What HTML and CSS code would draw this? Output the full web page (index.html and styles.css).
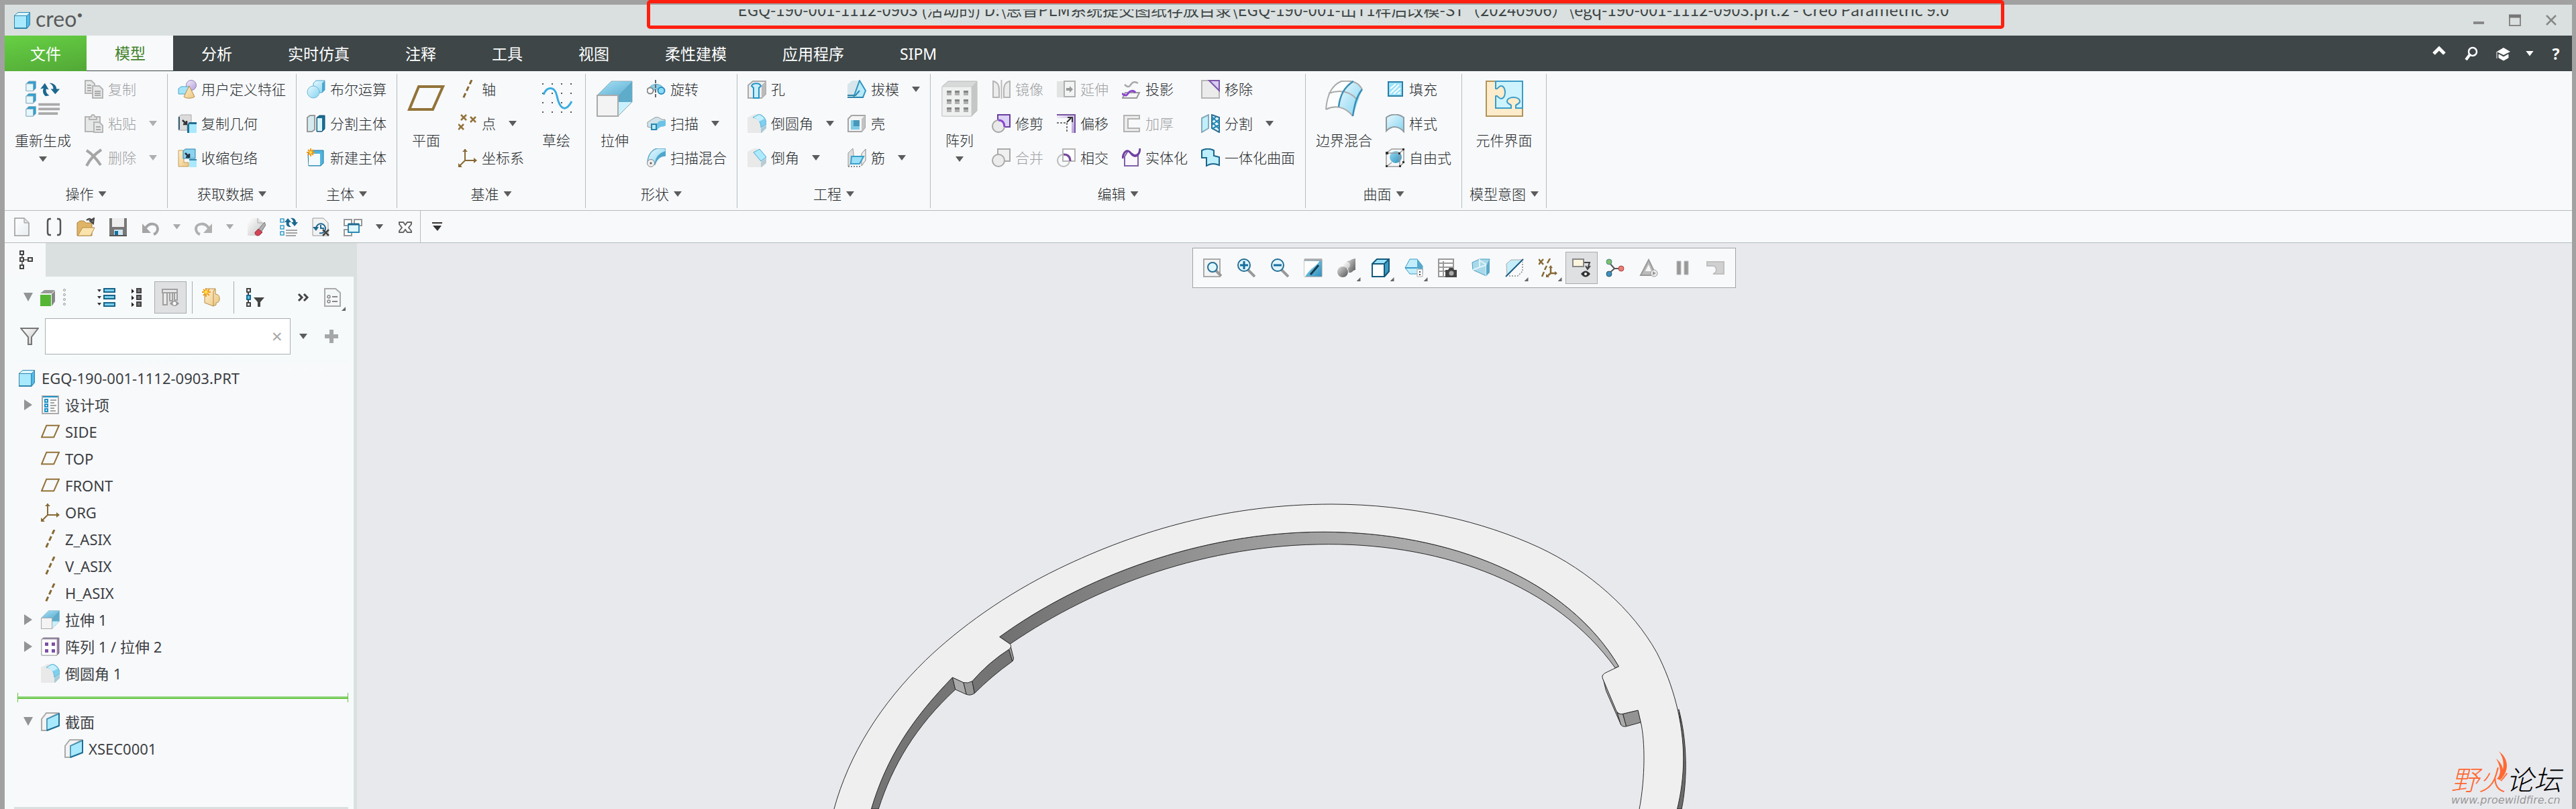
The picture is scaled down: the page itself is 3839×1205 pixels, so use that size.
FILE: index.html
```html
<!DOCTYPE html>
<html lang="zh-CN">
<head>
<meta charset="utf-8">
<title>Creo Parametric 9.0</title>
<link rel="stylesheet" href="styles.css">
</head>
<body>
<svg class="defs" aria-hidden="true">
  <defs>
    <linearGradient id="lb" x1="0" y1="0" x2="1" y2="1"><stop offset="0" stop-color="#e9f9fe"/><stop offset="1" stop-color="#84d3f1"/></linearGradient>
    <linearGradient id="db" x1="0" y1="0" x2="1" y2="1"><stop offset="0" stop-color="#9bdcf3"/><stop offset="1" stop-color="#2d8fbd"/></linearGradient>
    <linearGradient id="gr" x1="0" y1="0" x2="1" y2="1"><stop offset="0" stop-color="#fff"/><stop offset="1" stop-color="#c4c4c4"/></linearGradient>
    <linearGradient id="pg" x1="0" y1="0" x2="1" y2="1"><stop offset="0" stop-color="#fff"/><stop offset="1" stop-color="#e8edf1"/></linearGradient>
    <linearGradient id="dg" x1="0" y1="0" x2="1" y2="1"><stop offset="0" stop-color="#ddd"/><stop offset="1" stop-color="#555"/></linearGradient>
    <linearGradient id="tan" x1="0" y1="0" x2="1" y2="1"><stop offset="0" stop-color="#fff1cf"/><stop offset="1" stop-color="#ecc681"/></linearGradient>
    <linearGradient id="pu" x1="0" y1="0" x2="1" y2="1"><stop offset="0" stop-color="#f4effb"/><stop offset="1" stop-color="#b39ddb"/></linearGradient>
  </defs>
  <symbol id="cube" viewBox="0 0 28 28"><path d="M2 7 8 2h18v19l-5 6H2z" fill="#2f86ad"/><path d="M3 7 8 3h17l-4 4z" fill="#d9f5fe"/><path d="M3 8h17v17H3z" fill="#a9e9fd"/><path d="m21 8 4-4v17l-4 4z" fill="#52b9e6"/></symbol>
  <symbol id="regen" viewBox="0 0 54 56"><g id="rc"><path d="M1 5l4-4h11v11l-4 4H1z" fill="#2f9fd0" stroke="#93aebb"/><path d="M1 5h11v11H1z" fill="#e4f8fe" stroke="#93aebb"/></g><use href="#rc" y="19"/><use href="#rc" y="39"/><path d="M20 37h33M20 44h33M20 51h30" stroke="#a9a9a9" stroke-width="4"/><path d="M31 24c-4-3-5-8-3-12l-5 1 7-9 6 10-4-1c-1 4 1 8 5 10zM37 4c6-1 11 4 11 9h5l-7 8-7-8h4c0-4-2-7-6-9z" fill="#1c688f"/></symbol>
  <symbol id="copy" viewBox="0 0 28 28"><g fill="#e6e7e7" stroke="#b5b5b5" stroke-width="2"><path d="M1 1h9l5 5v14H1z"/><path d="M12 9h10l5 5v13H12z"/></g><path d="M4 8h6M4 12h6M4 16h6M15 17h9M15 20h9M15 23h9" stroke="#aaa" stroke-width="2"/></symbol>
  <symbol id="paste" viewBox="0 0 28 28"><g fill="#e6e7e7" stroke="#b5b5b5" stroke-width="2"><path d="M1 4h22v22H1z"/><path d="M7 4h3c0-4 5-4 5 0h3v4H7z"/><path d="M14 12h8l5 5v10H14z"/></g><path d="M17 19h7M17 23h7" stroke="#aaa" stroke-width="2"/></symbol>
  <symbol id="del" viewBox="0 0 28 28"><path d="M3 3c8 5 15 13 21 22M25 2C16 8 8 16 3 26" stroke="#a5a5a5" stroke-width="4" fill="none"/></symbol>
  <symbol id="udf" viewBox="0 0 28 28"><circle cx="20" cy="8" r="7.500" fill="url(#pu)" stroke="#8c86b5"/><path d="M1 13l4-3h12v11H1z" fill="#a5e4f8" stroke="#4aa7cd"/><path d="M17 9 9 25c3 3 13 3 16 0z" fill="url(#tan)" stroke="#b38a45"/></symbol>
  <symbol id="copygeo" viewBox="0 0 28 28"><path d="M1 4l4-3h15v12h-6v11H1z" fill="#dcdcdc" stroke="#aaa"/><path d="M1 4h2v19H1z" fill="#355f74"/><path d="m7 9 6 6m0-5v5H8" stroke="#333" stroke-width="2.500" fill="none"/><path d="M14 16l3-4h11v16H14z" fill="#1f6f94"/><path d="M17 15h11v13H17z" fill="#a9e9fd"/></symbol>
  <symbol id="shrink" viewBox="0 0 28 28"><path d="M1 3h8v18h7v6H1z" fill="url(#tan)" stroke="#c39a55"/><path d="M8 4l3-3h15v14H8z" fill="#8bd3ee" stroke="#2f86ad"/><path d="m11 7 6 6m0-5v5h-5" stroke="#234" stroke-width="2.500" fill="none"/><path d="M17 17h11v11H17z" fill="#a9e9fd"/><path d="M17 17h11" stroke="#2f86ad" stroke-width="2"/></symbol>
  <symbol id="bool" viewBox="0 0 28 28"><path d="M10 5l4-4h13v14l-4 4H10z" fill="url(#lb)" stroke="#4aa7cd"/><path d="m23 5 4-4v14l-4 4z" fill="#4aa7cd"/><ellipse cx="10" cy="18" rx="9" ry="9" fill="url(#lb)" stroke="#6bb7d6"/></symbol>
  <symbol id="split" viewBox="0 0 28 28"><path d="M1 5l4-3h7v21l-4 3H1z" fill="#d5e9f0" stroke="#999" stroke-width="2"/><path d="M15 5l4-3h8v20l-4 4h-8z" fill="#1c6d93" stroke="#14506d"/><path d="M16 6h7v19h-7z" fill="#d9f5fe"/></symbol>
  <symbol id="newbody" viewBox="0 0 28 28"><path d="M2 8l6-5h17v19l-4 4H3z" fill="#4fb4dc" stroke="#2477a0"/><path d="M3 8h17v17H3z" fill="#f3fafd"/><path d="M6 0v12M0 6h12M2 2l8 8M10 2l-8 8" stroke="#f09a1a" stroke-width="2"/><circle cx="6" cy="6" r="2" fill="#ffe04a"/></symbol>
  <symbol id="plane" viewBox="0 0 54 54"><path d="M16 9h36L37 43H2z" fill="none" stroke="#927339" stroke-width="4"/></symbol>
  <symbol id="axis" viewBox="0 0 28 28"><path d="M20 0 7 28" stroke="#866a34" stroke-width="3" stroke-dasharray="7 4" fill="none"/></symbol>
  <symbol id="point" viewBox="0 0 28 28"><path id="px" d="m4 1 8 8m0-8-8 8" stroke="#927339" stroke-width="2.500"/><use href="#px" x="14" y="3"/><use href="#px" x="-4" y="14"/></symbol>
  <symbol id="csys" viewBox="0 0 28 28"><path d="M10 1v17h17M10 18 1 27" stroke="#866a34" stroke-width="2" fill="none"/><path d="m6 5 4-4 4 4zM23 14l5 4-5 4zM0 22v6h6z" fill="#866a34"/></symbol>
  <symbol id="sketch" viewBox="0 0 54 54"><path d="M6 4h2v2H6zm14 0h2v2h-2zm14 0h2v2h-2zm14 0h2v2h-2zM6 18h2v2H6zm14 0h2v2h-2zm14 0h2v2h-2zm14 0h2v2h-2zM6 32h2v2H6zm14 0h2v2h-2zm14 0h2v2h-2zm14 0h2v2h-2zM6 46h2v2H6zm14 0h2v2h-2zm14 0h2v2h-2zm14 0h2v2h-2z" fill="#555"/><path d="M8 21c5-13 17-13 20 2s11 28 22 8" fill="none" stroke="#3aade0" stroke-width="3"/></symbol>
  <symbol id="extrude" viewBox="0 0 54 54"><path d="M1 22 22 1h31v31L32 53H1z" fill="#c9f1fd" stroke="#9aa5aa"/><path d="M22 1h31L32 22H1z" fill="url(#db)" opacity=".7"/><path d="M53 1v31H32V22z" fill="#5eabca"/><path d="M1 22h31v31H1z" fill="#f3f3f3" stroke="#aaa" stroke-width="2"/></symbol>
  <symbol id="revolve" viewBox="0 0 28 28"><path d="M3 14C5 4 23 4 25 14l-6 4c-3-6-7-6-10 0z" fill="#8ccfe8" stroke="#5aa9c8"/><circle cx="5" cy="16" r="4.500" fill="#fff" stroke="#888" stroke-width="2"/><circle cx="21.500" cy="16" r="5" fill="#8bdcf9" stroke="#2a8fc0" stroke-width="2"/><path d="M13 0v28" stroke="#666" stroke-width="2" stroke-dasharray="5 2"/></symbol>
  <symbol id="sweep" viewBox="0 0 28 28"><path d="M1 12 12 5c8-2 7 4 15 3v7c-8 3-9-2-16 6L1 19z" fill="#cfe3ea" stroke="#999"/><path d="M15 14c4-6 8-3 13-5v8c-6 3-8 0-13 7z" fill="#6cc3e5"/><path d="M7 15h7v8H7z" fill="#b8ecfc" stroke="#2a86b0" stroke-width="2"/></symbol>
  <symbol id="blend" viewBox="0 0 28 28"><path d="M1 20C2 8 9 1 16 0h12v11c-8 0-13 4-16 13z" fill="url(#lb)" stroke="#5fa9c5" stroke-width="1.500"/><path d="M12 24C12 13 18 7 28 4v7c-8 0-13 5-16 13z" fill="#4fa6cb"/><circle cx="6" cy="22" r="5.500" fill="#eee" stroke="#888"/><circle cx="6" cy="22" r="1.500" fill="#555"/></symbol>
  <symbol id="hole" viewBox="0 0 28 28"><path d="M1 8l7-6h19v19l-6 6H1z" fill="#eee" stroke="#aaa" stroke-width="2"/><path d="m21 8 6-6v19l-6 6z" fill="#bbb"/><path d="M6 9c2-5 12-5 14 0l-3 3v15H9V12z" fill="#c9effb" stroke="#2494c7" stroke-width="2"/></symbol>
  <symbol id="round" viewBox="0 0 28 28"><path d="M0 5 10 0h7L8 5c8 1 12 7 12 15v8H0z" fill="#e9e9e9"/><path d="M8 5 17 0c7 2 11 7 11 15l-8 5C20 11 15 6 8 5z" fill="#7fd0ef" stroke="#5ab0d2"/><path d="M9 5 17 1c4 1 6 3 8 6l-8 4c-2-3-5-5-8-6z" fill="#c4effc"/><path d="m20 21 8-5v5l-7 7h-1z" fill="#a9cbd8"/></symbol>
  <symbol id="chamfer" viewBox="0 0 28 28"><path d="M0 5 10 0h6L9 6l11 14v8H0z" fill="#e9e9e9"/><path d="m9 6 9-5 10 12-8 6z" fill="#aee9fc" stroke="#46a5cc"/><path d="m20 20 8-6v8l-7 6h-1z" fill="#b9ccd3"/></symbol>
  <symbol id="draft" viewBox="0 0 28 28"><path d="M0 7 7 1h11L9 25H0z" fill="#d7e6ea"/><path d="m18 1 9 15-4 10H9z" fill="#b9eafa" stroke="#2f95c2" stroke-width="2"/><path d="M0 23h12l6-7M0 26h24" stroke="#2f86ad" stroke-width="2" fill="none"/></symbol>
  <symbol id="shell" viewBox="0 0 28 28"><path d="M1 7l5-5h20v18l-5 6H1z" fill="#f4f4f4" stroke="#a5a5a5" stroke-width="2"/><path d="m21 7 5-5v18l-5 6z" fill="#c3c3c3"/><path d="M5 9h13v14H5z" fill="#80cce8"/><path d="M9 9h9v9H9z" fill="#4798b9"/></symbol>
  <symbol id="rib" viewBox="0 0 28 28"><path d="M1 7 8 0l2 17-9 10z" fill="#ddd" stroke="#999"/><path d="m21 8 6-7v17l-6 8z" fill="#eee" stroke="#888"/><path d="M6 12h18l-6 11H5z" fill="#9be0f7" stroke="#3aa0cb" stroke-width="2"/><path d="M1 27h19" stroke="#888" stroke-width="2" stroke-dasharray="2"/></symbol>
  <symbol id="pattern" viewBox="0 0 54 54"><path d="M1 9l9-8h43v44l-8 8H1z" fill="#d8d9d9" stroke="#b4b5b5"/><path d="M1 9h44v44H1z" fill="#eeefef" stroke="#ccc"/><path d="m45 9 8-8v44l-8 8z" fill="#c5c7c7"/><path d="M8 15h7v7H8zm12 0h7v7h-7zm13 0h7v7h-7zM8 28h7v7H8zm12 0h7v7h-7zm13 0h7v7h-7zM8 40h7v7H8zm12 0h7v7h-7zm13 0h7v7h-7z" fill="#b0b0b0"/><path d="M8 15h7v3H8zm12 0h7v3h-7zm13 0h7v3h-7zM8 28h7v3H8zm12 0h7v3h-7zm13 0h7v3h-7zM8 40h7v3H8zm12 0h7v3h-7zm13 0h7v3h-7z" fill="#858585"/></symbol>
  <symbol id="mirror" viewBox="0 0 28 28"><path d="M2 2c7 1 9 7 9 13v11H2zM27 2c-7 1-9 7-9 13v11h9z" fill="#ececec" stroke="#b5b5b5" stroke-width="2"/><path d="M14.500 0v28" stroke="#bbb" stroke-width="2"/></symbol>
  <symbol id="trim" viewBox="0 0 28 28"><path d="M9 1h18v18h-8C19 12 15 9 9 9z" fill="#dcd2f5" stroke="#6a3fa0" stroke-width="2"/><circle cx="10" cy="18" r="9" fill="#e2e2e2" fill-opacity=".7" stroke="#a5a5a5" stroke-width="2"/><path d="M10 9c6 0 9 4 9 10" stroke="#8b45d0" stroke-width="3" fill="none"/></symbol>
  <symbol id="merge" viewBox="0 0 28 28"><path d="M9 1h18v18H9z" fill="#f0f0f0" stroke="#aaa" stroke-width="2"/><circle cx="10" cy="18" r="9" fill="#ececec" stroke="#aaa" stroke-width="2"/></symbol>
  <symbol id="extend" viewBox="0 0 28 28"><path d="M0 2h11v24H0z" fill="#e2e3e3"/><path d="M11 2h16v23H11z" fill="#f3f4f4" stroke="#b0b0b0" stroke-width="2"/><path d="M14 12h5V9l5 5-5 5v-3h-5z" fill="#999"/></symbol>
  <symbol id="offset" viewBox="0 0 28 28"><path d="M0 0h28v28h-6V6H0z" fill="url(#pu)"/><path d="M0 1h27v27" stroke="#76559f" stroke-width="2" fill="none"/><path d="M0 13h15v15" stroke="#777" stroke-width="2" stroke-dasharray="3 2" fill="none"/><path d="m15 12 6-6m-5-1h7v7" stroke="#333" stroke-width="2" fill="none"/></symbol>
  <symbol id="intersect" viewBox="0 0 28 28"><path d="M9 1h18v18H9z" fill="#fff" stroke="#b5b5b5" stroke-width="2"/><circle cx="10" cy="18" r="9" fill="none" stroke="#bbb" stroke-width="2"/><path d="M10 9c7 0 10 4 10 10" stroke="#75489f" stroke-width="3" fill="none"/></symbol>
  <symbol id="project" viewBox="0 0 28 28"><path d="M4 7c6 6 8 2 10-1s6-4 10-1" stroke="#aaa" stroke-width="2.500" fill="none"/><path d="M5 19h21l-4 8H1z" fill="#f5f5f5" stroke="#999" stroke-width="2"/><path d="M0 20c6 6 8 2 10-1s7-4 10 0" stroke="#8b45d0" stroke-width="3" fill="none"/></symbol>
  <symbol id="thicken" viewBox="0 0 28 28"><path d="M26 2H3v24h23v-5H9V7h17z" fill="#ececec" stroke="#b3b3b3" stroke-width="2"/></symbol>
  <symbol id="solidify" viewBox="0 0 28 28"><path d="M4 12v14h20V8c-6 6-10-3-15-4z" fill="#faf8fd" stroke="#8160a8" stroke-width="2"/><path d="M1 15C2 5 8 0 13 7s13 6 14-7" fill="none" stroke="#71409f" stroke-width="3"/></symbol>
  <symbol id="remove" viewBox="0 0 28 28"><path d="M1 1h26v26H1z" fill="#ebebeb" stroke="#b5b5b5" stroke-width="2"/><path d="M12 1h15v15z" fill="#d8ccf4" stroke="#7c55a8" stroke-width="2"/></symbol>
  <symbol id="divide" viewBox="0 0 28 28"><path d="M1 6 11 1v20L1 27z" fill="#bff0fd" stroke="#8ab" stroke-width="2"/><path d="m16 1 11 4v22l-11-6z" fill="#e0f6fd" stroke="#2a6f94" stroke-width="2"/><path d="m16 4 11 10M16 12l11 10M27 8 16 16M27 16l-11 6M22 4l-6 6" stroke="#2487b5" stroke-width="2"/></symbol>
  <symbol id="unisurf" viewBox="0 0 28 28"><path d="M1 3c6-3 12-3 18 0v8l8 2v12c-7-3-13-3-19 1V14H1z" fill="#bdeefc" stroke="#19658c" stroke-width="2"/></symbol>
  <symbol id="boundary" viewBox="0 0 56 54"><path d="M1 43C3 20 10 7 24 1c12-1 24-1 31 12L41 53C30 39 15 36 1 43z" fill="#fbfdfe"/><path d="M28 16c4-7 8-12 14-15 7 2 11 6 13 12L41 53c-5-6-12-12-20-14 0-9 3-17 7-23z" fill="url(#lb)"/><path d="M1 43C3 20 10 7 24 1c12-1 24-1 31 12M1 43c14-7 29-4 40 10M5 19c15-5 30-5 42 9" stroke="#aaa" stroke-width="2" fill="none"/><path d="M42 1C28 10 22 22 20 39M55 13C46 25 44 35 41 53" stroke="#3b8eb5" stroke-width="2.500" fill="none"/></symbol>
  <symbol id="fill" viewBox="0 0 28 28"><path d="M4 3h21v21H4z" fill="#9be2fa" stroke="#2a7da5" stroke-width="2"/><path d="m7 13 8-7M7 20 20 7M12 21l10-9M18 21l4-3" stroke="#fff" stroke-width="2"/></symbol>
  <symbol id="style" viewBox="0 0 28 28"><path d="M1 5c8-6 18-6 26 0v21c-8-9-18-9-26-1z" fill="url(#lb)" stroke="#909a9e" stroke-width="2"/></symbol>
  <symbol id="free" viewBox="0 0 28 28"><circle cx="15" cy="13" r="9" fill="url(#db)"/><path d="M1 7 9 1h18v20l-6 6H1zM1 7h20v20M21 7l6-6M1 27l8-6" fill="none" stroke="#999" stroke-width="1.500"/><path d="M0 5h4v4H0zM0 25h3v3H0zM20 25h3v3h-3zM25 0h3v3h-3zM19 6h3v3h-3zM25 19h3v3h-3z" fill="#333"/></symbol>
  <symbol id="puzzle" viewBox="0 0 56 54"><path d="M1 1h54v52H1z" fill="#fdeccb" stroke="#b2935a" stroke-width="2"/><path d="M15 1h40v40H45v-4c1-2 6-2 6-6 0-8-19-8-19 0 0 4 5 4 6 6v4H15V23c3-2 4 4 8 4 8 0 8-19 0-19-4 0-5 6-8 4z" fill="#cdf3fe" stroke="#3a9cc8" stroke-width="2"/></symbol>
  <symbol id="new" viewBox="0 0 28 28"><path d="M4 1h14l7 7v19H4z" fill="url(#pg)" stroke="#999" stroke-width="1.500"/><path d="M18 1v7h7" fill="#ddd" stroke="#999"/></symbol>
  <symbol id="brackets" viewBox="0 0 28 28"><path d="M10 2H8Q5 2 5 6v16q0 4 3 4h2M19 2h2q3 0 3 4v16q0 4-3 4h-2" fill="none" stroke="#555" stroke-width="2.500"/></symbol>
  <symbol id="open" viewBox="0 0 28 28"><path d="M1 27V8l4-3h6l3 3h9v19z" fill="#e0b467" stroke="#ad8340"/><path d="m2 27 7-12h18l-6 12z" fill="#fbe3ac" stroke="#b58c48"/><path d="M15 4c4-4 7-2 8 1M26 1l-1 8-5-4z" stroke="#444" stroke-width="2" fill="#444" fill-opacity=".6"/></symbol>
  <symbol id="save" viewBox="0 0 28 28"><path d="M1 1h26v26H1z" fill="#777"/><path d="M5 1h18v13H5z" fill="#eee"/><path d="M8 18h13v9H8z" fill="#cfe6f0"/><path d="M9 20h5v6H9z" fill="#14719f"/><path d="M1 27h26" stroke="#555" stroke-width="2"/></symbol>
  <symbol id="undo" viewBox="0 0 28 28"><path d="M2 9v14h13z" fill="#a5a5a5"/><path d="M6 18C11 6 25 8 25 17c0 4-3 7-6 8" fill="none" stroke="#a5a5a5" stroke-width="4"/></symbol>
  <symbol id="redo" viewBox="0 0 28 28"><path d="M27 9v14H14z" fill="#b0b0b0"/><path d="M23 18C18 6 3 8 3 17c0 4 3 7 6 8" fill="none" stroke="#b0b0b0" stroke-width="4"/></symbol>
  <symbol id="erase" viewBox="0 0 28 28"><path d="M1 1h16l7 7-8 19H1z" fill="url(#gr)"/><path d="M16 1v7h8" fill="none" stroke="#aaa"/><path d="m26 7-9 11 4 4 7-11z" fill="#b0b0b0" stroke="#777"/><path d="m17 17-5 5c0 5 4 6 7 4l4-4z" fill="#d24555" stroke="#963040"/></symbol>
  <symbol id="regens" viewBox="0 0 28 28"><path d="M2 2h5v5H2zM2 12h5v5H2zM2 21h5v5H2z" fill="#eafaff" stroke="#3a9cc8" stroke-width="1.500"/><path d="M10 19h17M10 23h17M10 27h15" stroke="#888" stroke-width="1.500"/><path d="M15 14c-4-1-5-4-4-7H8l5-6 5 6h-3c-1 3 0 5 3 7zM17 1c5-1 8 2 8 6h3l-5 6-5-6h3c0-3-2-5-4-6z" fill="#1c688f"/></symbol>
  <symbol id="history" viewBox="0 0 28 28"><path d="M2 1h16l7 7v19H2z" fill="#f3f3f3" stroke="#999"/><path d="M7 16a7 7 0 1 1 5 7M14 11v5h5" fill="none" stroke="#1c688f" stroke-width="2"/><path d="M2 14h9l-4 6z" fill="#1c688f"/><path d="m17 18 9 9m0-9-9 9" stroke="#444" stroke-width="2.500"/></symbol>
  <symbol id="windows" viewBox="0 0 28 28"><path d="M1 3h11v9H1zM16 3h11v9H16zM1 18h11v9H1z" fill="#fff" stroke="#999" stroke-width="2"/><path d="M7 10h16v12H7z" fill="#dff6fd" stroke="#2a8ab5" stroke-width="2"/><path d="M7 10h16" stroke="#1c688f" stroke-width="3"/></symbol>
  <symbol id="closex" viewBox="0 0 28 28"><path d="M5 7h6l3 4 3-4h6v3l-4 5 4 5v2h-6l-3-4-3 4H5v-2l4-5-4-5z" fill="#fff" stroke="#666" stroke-width="2"/></symbol>
  <symbol id="more" viewBox="0 0 28 28"><path d="M7 8h15" stroke="#333" stroke-width="2"/><path d="M8 12h13l-6 8z" fill="#333"/></symbol>
  <symbol id="tree" viewBox="0 0 28 28"><path d="M9 6v16M9 14h9" stroke="#777" stroke-width="2"/><path d="M6 1h5v5H6zM6 11h5v5H6zM6 22h5v5H6zM18 11h6v5h-6z" fill="#fff" stroke="#444" stroke-width="2"/></symbol>
  <symbol id="green" viewBox="0 0 28 28"><path d="M3 8 9 3h16l-5 5z" fill="#999"/><path d="M3 10h16v17H3z" fill="#55b635"/><path d="m20 9 5-5v16l-5 7z" fill="#888"/></symbol>
  <symbol id="dots" viewBox="0 0 28 28"><g fill="#fff" stroke="#999"><circle cx="14" cy="3" r="1.500"/><circle cx="14" cy="10" r="1.500"/><circle cx="14" cy="17" r="1.500"/><circle cx="14" cy="24" r="1.500"/></g></symbol>
  <symbol id="expand" viewBox="0 0 28 28"><path d="M0 2h6L3 6zM0 12h6l-3 4zM0 22h6l-3 4z" fill="#333"/><path d="M10 1h16v5H10zM10 11h16v5H10zM10 22h16v5H10z" fill="#7cd0ef" stroke="#176389" stroke-width="2"/></symbol>
  <symbol id="collapse" viewBox="0 0 28 28"><path d="M6 1v7l4-3zM6 11v7l4-3zM6 21v7l4-3z" fill="#222"/><path d="M14 1h6v6h-6zM14 11h6v6h-6zM14 21h6v6h-6z" fill="#777" stroke="#444" stroke-width="2"/></symbol>
  <symbol id="columns" viewBox="0 0 28 28"><path d="M2 2h22v5H2zM3 7h6v18H3zM13 7h4v12h-4zM20 7h4v11h-4z" fill="#e9e9ea" stroke="#a0a0a0" stroke-width="2"/><path d="M13 23q7-8 14 0-7 8-14 0z" fill="#999"/><circle cx="20" cy="23" r="2.500" fill="#fff"/></symbol>
  <symbol id="newtan" viewBox="0 0 28 28"><path d="M4 4l4-3h12v8c6 1 6 4 6 7s-1 6-5 6v3l-4 2-13-5z" fill="url(#tan)" stroke="#b58c48"/><path d="M17 5v22M17 5l3-4" stroke="#b58c48"/><path d="M6 0v13M0 6h13M2 2l9 9M11 2l-9 9" stroke="#f09a1a" stroke-width="2"/><circle cx="6" cy="6" r="2.500" fill="#ffe04a"/></symbol>
  <symbol id="treefilter" viewBox="0 0 28 28"><path d="M4 5v18" stroke="#444" stroke-width="2"/><path d="M2 1h5v5H2zM2 22h5v5H2z" fill="#fff" stroke="#444" stroke-width="2"/><path d="M2 11h5v6H2z" fill="#5cc3ec" stroke="#1c688f" stroke-width="2"/><path d="M12 14h16l-6 7v7h-4v-7z" fill="#444"/></symbol>
  <symbol id="chevrons" viewBox="0 0 28 28"><path d="m7 9 5 5-5 5M15 9l5 5-5 5" fill="none" stroke="#444" stroke-width="3"/></symbol>
  <symbol id="listdoc" viewBox="0 0 28 28"><path d="M2 1h16l7 6v20H2z" fill="#f3f7f8" stroke="#aaa" stroke-width="2"/><circle cx="8" cy="13" r="2" fill="none" stroke="#888" stroke-width="1.500"/><circle cx="8" cy="20" r="2" fill="none" stroke="#888" stroke-width="1.500"/><path d="M13 13h8M13 20h8" stroke="#888" stroke-width="2"/></symbol>
  <symbol id="funnel" viewBox="0 0 28 28"><path d="M1 2h26L17 15v11h-5V15z" fill="url(#gr)" stroke="#777" stroke-width="2"/></symbol>
  <symbol id="items" viewBox="0 0 28 28"><path d="M2 1h24v26H2z" fill="#fbfbfb" stroke="#aaa" stroke-width="2"/><path d="M3 2h22" stroke="#2494c7" stroke-width="2"/><path d="M6 6h4v4H6zM6 13h4v4H6zM6 20h4v4H6z" fill="#d9f5fe" stroke="#2494c7" stroke-width="2"/><path d="M14 7h9M14 11h6M14 15h9M14 19h6M14 23h8" stroke="#888" stroke-width="1.500"/></symbol>
  <symbol id="patternp" viewBox="0 0 28 28"><path d="M1 3l3-2h23v23l-3 3H1z" fill="#8c6ba8" stroke="#888"/><path d="M1 3h23v24H1z" fill="#fff" stroke="#aaa"/><path d="M6 8h5v5H6zM16 8h5v5h-5zM6 18h5v5H6zM16 18h5v5h-5z" fill="#7a51a6"/></symbol>
  <symbol id="section" viewBox="0 0 28 28"><path d="M1 10 8 1l19 0L9 10v17H1z" fill="#f3f3f3" stroke="#aaa" stroke-width="2"/><path d="m9 10 18-8v18L9 27z" fill="#a9e9fd" stroke="#3a8fb5" stroke-width="1.500"/><path d="M27 1v19L9 27" fill="none" stroke="#1f6f94" stroke-width="2"/></symbol>
  <symbol id="zfit" viewBox="0 0 28 28"><path d="M1 1h24v26H1z" fill="#f3f3f3" stroke="#aaa" stroke-width="2"/><path d="m18 17 9 9" stroke="#999" stroke-width="4"/><circle cx="14" cy="13" r="7" fill="#dff5fc" stroke="#256f94" stroke-width="2"/></symbol>
  <symbol id="zin" viewBox="0 0 28 28"><path d="m16 16 11 11" stroke="#999" stroke-width="4"/><circle cx="11" cy="10" r="9" fill="#dff5fc" stroke="#256f94" stroke-width="2"/><path d="M5 10h12M11 4v12" stroke="#176f9b" stroke-width="3"/></symbol>
  <symbol id="zout" viewBox="0 0 28 28"><path d="m16 16 11 11" stroke="#999" stroke-width="4"/><circle cx="11" cy="10" r="9" fill="#dff5fc" stroke="#256f94" stroke-width="2"/><path d="M5 10h12" stroke="#176f9b" stroke-width="3"/></symbol>
  <symbol id="repaint" viewBox="0 0 28 28"><path d="M1 1h26v26H1z" fill="url(#db)" stroke="#999"/><path d="M1 4h22C21 10 10 14 2 27H1z" fill="#fff"/><path d="M1 2h26" stroke="#aaa" stroke-width="3"/><path d="M22 10 10 24" stroke="#173c50" stroke-width="3"/></symbol>
  <symbol id="render" viewBox="0 0 28 28"><path d="M14 4c5 0 8-4 13-4v17c-4 0-4 5-10 4z" fill="url(#dg)"/><circle cx="14" cy="10" r="5" fill="url(#gr)"/><circle cx="8" cy="20" r="8" fill="url(#dg)"/></symbol>
  <symbol id="display" viewBox="0 0 28 28"><path d="M2 8 9 1h18v18l-7 8H2z" fill="#9be2fa" stroke="#14597c" stroke-width="2"/><path d="m20 8 7-7v18l-7 8z" fill="#3d9cc4" stroke="#14597c" stroke-width="2"/><path d="M2 8h18v19H2z" fill="#fff" stroke="#14597c" stroke-width="2"/></symbol>
  <symbol id="views" viewBox="0 0 28 28"><path d="m1 14 7-13h11l8 10v12H8z" fill="#c2edfa" stroke="#3a9cc8"/><path d="m19 1 8 10v12l-8-9z" fill="#56a9cb"/><path d="M1 14h18" stroke="#3a9cc8" stroke-width="2"/><path d="M19 16h8v11h-8z" fill="#fff" stroke="#aaa"/><path d="M22 19h2v2h-2zM22 23h2v2h-2z" fill="#444"/></symbol>
  <symbol id="vmgr" viewBox="0 0 28 28"><path d="M1 1h22v26H1zM1 7h22M1 13h22M1 19h22M8 4v23" fill="#fff" stroke="#999" stroke-width="2"/><path d="M11 17h4l2-3h5l2 3h4v11H11z" fill="#444"/><circle cx="20" cy="22" r="3.500" fill="#aaa"/></symbol>
  <symbol id="persp" viewBox="0 0 28 28"><path d="M1 6 12 1h15l-5 25L2 17z" fill="#a8d9ea" stroke="#4a9dc0"/><path d="M12 1v12l15-5M12 13 2 17M22 26V9L12 3" fill="none" stroke="#e0f4fa" stroke-width="2"/><path d="M22 10 27 1v20l-5 5z" fill="#5ba8c8"/></symbol>
  <symbol id="cut" viewBox="0 0 28 28"><path d="M2 8 9 2h18L3 26z" fill="#c5eefa" stroke="#aaa"/><path d="M1 27 27 1" stroke="#1b5d85" stroke-width="2"/><path d="M6 26h13l7-7V5" fill="none" stroke="#888" stroke-width="1.500" stroke-dasharray="2"/></symbol>
  <symbol id="datum" viewBox="0 0 28 28"><path d="m0 1 7 8m0-8L0 9M17 0l-4 7M12 11l-3 6M8 20l-3 7M18 12v10h9M18 22l-6 5" fill="none" stroke="#866a34" stroke-width="2.500"/><path d="m15 14 3-4 3 4zM24 19l4 3-4 3zM11 23v5h5z" fill="#866a34"/></symbol>
  <symbol id="anno" viewBox="0 0 28 28"><path d="M1 1h16v11H1z" fill="#fdf6df" stroke="#888" stroke-width="2"/><path d="M18 6h8l-3 9M20 11l3 5 4-5" stroke="#444" stroke-width="2" fill="none"/><path d="M13 23q7-9 14 0-7 9-14 0z" fill="#333"/><circle cx="20" cy="23" r="2" fill="#fff"/></symbol>
  <symbol id="spin" viewBox="0 0 28 28"><path d="M5 6 13 15 4 23M13 15h11" stroke="#555" stroke-width="2" fill="none"/><circle cx="5" cy="5" r="4" fill="#7fbf6a" stroke="#488"/><circle cx="5" cy="23" r="4" fill="#3f8fc0" stroke="#256"/><circle cx="23" cy="15" r="4" fill="#e87c74" stroke="#a44"/></symbol>
  <symbol id="sim" viewBox="0 0 28 28"><path d="M14 2 25 25H2z" fill="#bbb" stroke="#999" stroke-width="2"/><path d="m14 9 4 10h-9z" fill="#f5f5f5"/><circle cx="22" cy="22" r="5" fill="#eee" stroke="#999"/><path d="m20 19 5 3-5 3z" fill="#999"/></symbol>
  <symbol id="pause" viewBox="0 0 28 28"><path d="M6 4h6v20H6zM17 4h6v20h-6z" fill="#999" stroke="#bbb"/></symbol>
  <symbol id="exit" viewBox="0 0 28 28"><path d="M1 5h25v18H10c7-2 6-12-1-12H1z" fill="#d0d0d0" stroke="#c0c0c0" stroke-width="2"/></symbol>
  <symbol id="w-min" viewBox="0 0 28 28"><path d="M6 18h16" stroke="#888" stroke-width="4"/></symbol>
  <symbol id="w-max" viewBox="0 0 28 28"><path d="M6 7h16v15H6z" fill="none" stroke="#888" stroke-width="2"/><path d="M5 8h18" stroke="#777" stroke-width="5"/></symbol>
  <symbol id="w-close" viewBox="0 0 28 28"><path d="m7 7 14 14m0-14L7 21" stroke="#888" stroke-width="2.500"/></symbol>
  <symbol id="up" viewBox="0 0 28 28"><path d="m6 14 8-8 8 8" fill="none" stroke="#fff" stroke-width="5"/></symbol>
  <symbol id="search" viewBox="0 0 28 28"><circle cx="16" cy="11" r="6" fill="none" stroke="#fff" stroke-width="2.500"/><path d="m12 15-6 8" stroke="#fff" stroke-width="4"/></symbol>
  <symbol id="learn" viewBox="0 0 28 28"><path d="m4 11 10-6 10 6-10 5z" fill="#fff"/><path d="m7 15 7 4 7-4v5l-7 4-7-4zM4 11v10" fill="#fff" stroke="#fff"/></symbol>
</svg>

<div class="window">
  <header class="titlebar">
    <div class="brand"><svg class="i"><use href="#cube"/></svg><span class="brand-name">creo<sup>•</sup></span></div>
    <div class="caption"><h1>EGQ-190-001-1112-0903 (活动的) D:\思普PLM系统提交图纸存放目录\EGQ-190-001-出T1样后改模-ST（20240906）\egq-190-001-1112-0903.prt.2 - Creo Parametric 9.0</h1></div>
    <div class="win-buttons">
      <button aria-label="最小化"><svg class="i"><use href="#w-min"/></svg></button>
      <button aria-label="最大化"><svg class="i"><use href="#w-max"/></svg></button>
      <button aria-label="关闭"><svg class="i"><use href="#w-close"/></svg></button>
    </div>
    <div class="highlight"></div>
  </header>

  <nav class="tabs">
    <button class="tab file">文件</button><button class="tab active">模型</button><button class="tab">分析</button><button class="tab">实时仿真</button><button class="tab">注释</button><button class="tab">工具</button><button class="tab">视图</button><button class="tab">柔性建模</button><button class="tab">应用程序</button><button class="tab">SIPM</button>
    <div class="tab-tools">
      <button aria-label="折叠功能区"><svg class="i"><use href="#up"/></svg></button>
      <button aria-label="搜索"><svg class="i"><use href="#search"/></svg></button>
      <button aria-label="学习"><svg class="i"><use href="#learn"/></svg></button>
      <button class="narrow" aria-label="更多"><span class="caret"></span></button>
      <button class="help">?</button>
    </div>
  </nav>

  <div class="ribbon">
    <section class="group">
      <div class="cols">
        <button class="big"><svg class="ib"><use href="#regen"/></svg><span>重新生成</span><i class="caret"></i></button>
        <div class="col">
          <button class="cmd" disabled><svg class="i"><use href="#copy"/></svg>复制</button>
          <button class="cmd" disabled><svg class="i"><use href="#paste"/></svg>粘贴<i class="caret"></i></button>
          <button class="cmd" disabled><svg class="i"><use href="#del"/></svg>删除<i class="caret"></i></button>
        </div>
      </div>
      <button class="group-label">操作<i class="caret"></i></button>
    </section>
    <section class="group">
      <div class="cols">
        <div class="col">
          <button class="cmd"><svg class="i"><use href="#udf"/></svg>用户定义特征</button>
          <button class="cmd"><svg class="i"><use href="#copygeo"/></svg>复制几何</button>
          <button class="cmd"><svg class="i"><use href="#shrink"/></svg>收缩包络</button>
        </div>
      </div>
      <button class="group-label">获取数据<i class="caret"></i></button>
    </section>
    <section class="group">
      <div class="cols">
        <div class="col">
          <button class="cmd"><svg class="i"><use href="#bool"/></svg>布尔运算</button>
          <button class="cmd"><svg class="i"><use href="#split"/></svg>分割主体</button>
          <button class="cmd"><svg class="i"><use href="#newbody"/></svg>新建主体</button>
        </div>
      </div>
      <button class="group-label">主体<i class="caret"></i></button>
    </section>
    <section class="group">
      <div class="cols">
        <button class="big"><svg class="ib"><use href="#plane"/></svg><span>平面</span></button>
        <div class="col">
          <button class="cmd"><svg class="i"><use href="#axis"/></svg>轴</button>
          <button class="cmd"><svg class="i"><use href="#point"/></svg>点<i class="caret"></i></button>
          <button class="cmd"><svg class="i"><use href="#csys"/></svg>坐标系</button>
        </div>
        <button class="big"><svg class="ib"><use href="#sketch"/></svg><span>草绘</span></button>
      </div>
      <button class="group-label">基准<i class="caret"></i></button>
    </section>
    <section class="group">
      <div class="cols">
        <button class="big"><svg class="ib"><use href="#extrude"/></svg><span>拉伸</span></button>
        <div class="col">
          <button class="cmd"><svg class="i"><use href="#revolve"/></svg>旋转</button>
          <button class="cmd"><svg class="i"><use href="#sweep"/></svg>扫描<i class="caret"></i></button>
          <button class="cmd"><svg class="i"><use href="#blend"/></svg>扫描混合</button>
        </div>
      </div>
      <button class="group-label">形状<i class="caret"></i></button>
    </section>
    <section class="group">
      <div class="cols">
        <div class="col">
          <button class="cmd"><svg class="i"><use href="#hole"/></svg>孔</button>
          <button class="cmd"><svg class="i"><use href="#round"/></svg>倒圆角<i class="caret"></i></button>
          <button class="cmd"><svg class="i"><use href="#chamfer"/></svg>倒角<i class="caret"></i></button>
        </div>
        <div class="col">
          <button class="cmd"><svg class="i"><use href="#draft"/></svg>拔模<i class="caret"></i></button>
          <button class="cmd"><svg class="i"><use href="#shell"/></svg>壳</button>
          <button class="cmd"><svg class="i"><use href="#rib"/></svg>筋<i class="caret"></i></button>
        </div>
      </div>
      <button class="group-label">工程<i class="caret"></i></button>
    </section>
    <section class="group">
      <div class="cols">
        <button class="big"><svg class="ib"><use href="#pattern"/></svg><span>阵列</span><i class="caret"></i></button>
        <div class="col">
          <button class="cmd" disabled><svg class="i"><use href="#mirror"/></svg>镜像</button>
          <button class="cmd"><svg class="i"><use href="#trim"/></svg>修剪</button>
          <button class="cmd" disabled><svg class="i"><use href="#merge"/></svg>合并</button>
        </div>
        <div class="col">
          <button class="cmd" disabled><svg class="i"><use href="#extend"/></svg>延伸</button>
          <button class="cmd"><svg class="i"><use href="#offset"/></svg>偏移</button>
          <button class="cmd"><svg class="i"><use href="#intersect"/></svg>相交</button>
        </div>
        <div class="col">
          <button class="cmd"><svg class="i"><use href="#project"/></svg>投影</button>
          <button class="cmd" disabled><svg class="i"><use href="#thicken"/></svg>加厚</button>
          <button class="cmd"><svg class="i"><use href="#solidify"/></svg>实体化</button>
        </div>
        <div class="col">
          <button class="cmd"><svg class="i"><use href="#remove"/></svg>移除</button>
          <button class="cmd"><svg class="i"><use href="#divide"/></svg>分割<i class="caret"></i></button>
          <button class="cmd"><svg class="i"><use href="#unisurf"/></svg>一体化曲面</button>
        </div>
      </div>
      <button class="group-label">编辑<i class="caret"></i></button>
    </section>
    <section class="group">
      <div class="cols">
        <button class="big"><svg class="ib"><use href="#boundary"/></svg><span>边界混合</span></button>
        <div class="col">
          <button class="cmd"><svg class="i"><use href="#fill"/></svg>填充</button>
          <button class="cmd"><svg class="i"><use href="#style"/></svg>样式</button>
          <button class="cmd"><svg class="i"><use href="#free"/></svg>自由式</button>
        </div>
      </div>
      <button class="group-label">曲面<i class="caret"></i></button>
    </section>
    <section class="group">
      <div class="cols">
        <button class="big"><svg class="ib"><use href="#puzzle"/></svg><span>元件界面</span></button>
      </div>
      <button class="group-label">模型意图<i class="caret"></i></button>
    </section>
  </div>

  <div class="quick">
    <button aria-label="新建"><svg class="i"><use href="#new"/></svg></button>
    <button aria-label="窗口"><svg class="i"><use href="#brackets"/></svg></button>
    <button aria-label="打开"><svg class="i"><use href="#open"/></svg></button>
    <button aria-label="保存"><svg class="i"><use href="#save"/></svg></button>
    <button aria-label="撤消"><svg class="i"><use href="#undo"/></svg></button>
    <button class="narrow pale" aria-label="撤消列表"><i class="caret"></i></button>
    <button aria-label="重做"><svg class="i"><use href="#redo"/></svg></button>
    <button class="narrow pale" aria-label="重做列表"><i class="caret"></i></button>
    <button aria-label="拭除"><svg class="i"><use href="#erase"/></svg></button>
    <button aria-label="重新生成"><svg class="i"><use href="#regens"/></svg></button>
    <button aria-label="历史"><svg class="i"><use href="#history"/></svg></button>
    <button aria-label="窗口切换"><svg class="i"><use href="#windows"/></svg></button>
    <button class="narrow" aria-label="窗口列表"><i class="caret"></i></button>
    <button class="last" aria-label="关闭窗口"><svg class="i"><use href="#closex"/></svg></button>
    <button aria-label="自定义"><svg class="i"><use href="#more"/></svg></button>
  </div>

  <div class="work">
    <aside class="side">
      <div class="side-tabs"><button class="side-tab" aria-label="模型树"><svg class="i"><use href="#tree"/></svg></button></div>
      <div class="panel">
        <div class="tree-tools">
          <button aria-label="折叠"><i class="twist down"></i></button>
          <button aria-label="模型"><svg class="i"><use href="#green"/></svg></button>
          <svg class="i"><use href="#dots"/></svg>
          <span></span>
          <button aria-label="全部展开"><svg class="i"><use href="#expand"/></svg></button>
          <button aria-label="全部折叠"><svg class="i"><use href="#collapse"/></svg></button>
          <span></span>
          <button class="pressed" aria-label="树列"><svg class="i"><use href="#columns"/></svg></button>
          <span class="bar"></span>
          <button aria-label="新建组"><svg class="i"><use href="#newtan"/></svg></button>
          <span class="bar"></span>
          <button aria-label="树过滤器"><svg class="i"><use href="#treefilter"/></svg></button>
          <span></span>
          <button aria-label="更多工具"><svg class="i"><use href="#chevrons"/></svg></button>
          <span></span>
          <button class="corner" aria-label="设置"><svg class="i"><use href="#listdoc"/></svg></button>
        </div>
        <div class="filter">
          <svg class="i"><use href="#funnel"/></svg>
          <div class="field"><input type="text" aria-label="过滤"><button class="clear" aria-label="清除">✕</button></div>
          <button aria-label="过滤选项"><i class="caret"></i></button>
          <button class="plus" aria-label="添加"></button>
        </div>
        <ul class="tree">
          <li class="root"><svg class="i"><use href="#cube"/></svg>EGQ-190-001-1112-0903.PRT</li>
          <li><i class="twist"></i><svg class="i"><use href="#items"/></svg>设计项</li>
          <li class="leaf"><svg class="i"><use href="#plane"/></svg>SIDE</li>
          <li class="leaf"><svg class="i"><use href="#plane"/></svg>TOP</li>
          <li class="leaf"><svg class="i"><use href="#plane"/></svg>FRONT</li>
          <li class="leaf"><svg class="i"><use href="#csys"/></svg>ORG</li>
          <li class="leaf"><svg class="i"><use href="#axis"/></svg>Z_ASIX</li>
          <li class="leaf"><svg class="i"><use href="#axis"/></svg>V_ASIX</li>
          <li class="leaf"><svg class="i"><use href="#axis"/></svg>H_ASIX</li>
          <li><i class="twist"></i><svg class="i"><use href="#extrude"/></svg>拉伸 1</li>
          <li><i class="twist"></i><svg class="i"><use href="#patternp"/></svg>阵列 1 / 拉伸 2</li>
          <li class="leaf"><svg class="i"><use href="#round"/></svg>倒圆角 1</li>
          <li class="insert"></li>
          <li><i class="twist down"></i><svg class="i"><use href="#section"/></svg>截面</li>
          <li class="leaf deep"><svg class="i"><use href="#section"/></svg>XSEC0001</li>
        </ul>
      </div>
    </aside>

    <main class="view">
      <svg class="model" viewBox="0 0 3301 843" preserveAspectRatio="xMidYMin slice">
        <defs><linearGradient id="wall" gradientUnits="userSpaceOnUse" x1="334" y1="0" x2="1398" y2="0"><stop offset="0" stop-color="#707070"/><stop offset=".35" stop-color="#969696"/><stop offset=".6" stop-color="#a9a9a9"/><stop offset="1" stop-color="#b0b0b0"/></linearGradient></defs>
        <g transform="translate(668 358) scale(.8673 .3333)" stroke="#2a2a2a" stroke-linejoin="round">
          <path d="M1501 1010C1516 1150 1516 1330 1506 1455H1496C1508 1310 1508 1120 1501 1010z" fill="#6b6b6b"/>
          <path d="M113 1455C140 1220 185 1050 253 867L258 921C190 1085 150 1260 126 1455z" fill="#757575"/>
          <path d="M334 686C475 420 680 217 890 217C1110 217 1310 430 1398 818L1392 825C1290 455 1100 272 900 272C690 272 500 455 352 718z" fill="url(#wall)"/>
          <path d="M253 867L272 890L277 943L258 921z" fill="#ababab"/>
          <path d="M272 890Q280 893 287 884L291 938Q284 950 277 943z" fill="#989898"/>
          <path d="M287 884Q315 800 350 742L356 795Q320 862 291 938z" fill="#747474"/>
          <path d="M352 718L358 780Q358 790 356 795L350 742z" fill="#9a9a9a"/>
          <path d="M1370 860L1376 926L1402 1080L1395 1022z" fill="#a5a5a5"/>
          <path d="M1395 1022Q1398 1034 1405 1030L1411 1086Q1403 1090 1401 1074z" fill="#aaa"/>
          <path d="M1405 1030L1431 1014L1436 1068L1411 1086z" fill="#939393"/>
          <path d="M49 1460C75 1210 130 985 207 790C265 645 345 495 435 382C575 205 730 93 905 93C1042 93 1165 171 1260 285C1348 391 1422 565 1463 755C1492 900 1509 1070 1509 1230C1509 1310 1505 1385 1498 1460H1433C1444 1310 1443 1150 1436 1070L1431 1014L1405 1030Q1398 1034 1394 1018L1370 870Q1368 853 1378 843L1398 818C1310 430 1110 217 890 217C680 217 475 420 334 686L352 718Q356 730 350 742Q315 800 287 884Q280 895 272 890L253 867C185 1050 140 1220 113 1460z" fill="#efefef"/>
        </g>
      </svg>
      <div class="view-tools">
        <button aria-label="重新调整"><svg class="i"><use href="#zfit"/></svg></button>
        <button aria-label="放大"><svg class="i"><use href="#zin"/></svg></button>
        <button aria-label="缩小"><svg class="i"><use href="#zout"/></svg></button>
        <button aria-label="重画"><svg class="i"><use href="#repaint"/></svg></button>
        <button class="corner" aria-label="渲染"><svg class="i"><use href="#render"/></svg></button>
        <button class="corner" aria-label="显示样式"><svg class="i"><use href="#display"/></svg></button>
        <button class="corner" aria-label="已保存方向"><svg class="i"><use href="#views"/></svg></button>
        <button aria-label="视图管理器"><svg class="i"><use href="#vmgr"/></svg></button>
        <button aria-label="透视图"><svg class="i"><use href="#persp"/></svg></button>
        <button class="corner" aria-label="截面"><svg class="i"><use href="#cut"/></svg></button>
        <button class="corner" aria-label="基准显示"><svg class="i"><use href="#datum"/></svg></button>
        <button class="pressed" aria-label="注释显示"><svg class="i"><use href="#anno"/></svg></button>
        <button aria-label="旋转中心"><svg class="i"><use href="#spin"/></svg></button>
        <button aria-label="仿真"><svg class="i"><use href="#sim"/></svg></button>
        <button aria-label="暂停"><svg class="i"><use href="#pause"/></svg></button>
        <button aria-label="退出"><svg class="i"><use href="#exit"/></svg></button>
      </div>
      <div class="mark">
        <svg class="flame" viewBox="0 0 20 44"><path d="M7 0c14 10 17 28 2 43l-5-2c8-8 5-20-1-30 5 4 9 9 10 16C15 17 13 8 7 0z" fill="#ff6a34"/></svg>
        <div class="mark-name"><span>野火</span>论坛</div>
        <div class="mark-url">www.proewildfire.cn</div>
      </div>
    </main>
  </div>
</div>
</body>
</html>
```

FILE: styles.css
```css
* { box-sizing: border-box; }

html, body { margin: 0; height: 100%; }

body {
  font-family: "Noto Sans", "Noto Sans CJK SC", sans-serif;
  font-size: 21px;
  line-height: 30px;
  color: #3c4043;
  overflow: hidden;
}

button {
  border: 0;
  padding: 0;
  background: none;
  font: inherit;
  color: inherit;
  display: flex;
  align-items: center;
  justify-content: center;
  white-space: nowrap;
}

.defs { position: absolute; width: 0; height: 0; }
.i { width: 28px; height: 28px; flex: none; display: block; }
.ib { width: 56px; height: 54px; flex: none; display: block; }

.caret {
  display: block;
  width: 12px;
  height: 8px;
  flex: none;
  background: #5c5c5c;
  clip-path: polygon(0 0, 100% 0, 50% 100%);
}

.window {
  height: 100vh;
  display: flex;
  flex-direction: column;
  border: solid #a1a1a1;
  border-width: 7px 6px 0 7px;
  background: #f8f9fb;
}

/* Title bar */
.titlebar {
  position: relative;
  height: 46px;
  flex: none;
  display: flex;
  background: #dae0df;
}
.brand { width: 330px; padding-left: 12px; display: flex; align-items: center; gap: 6px; }
.brand-name { font: 32px/32px Lato, sans-serif; color: #595b5c; padding-bottom: 4px; }
.brand-name sup { font-size: 16px; line-height: 1px; }
.caption { flex: 1; height: 30px; margin-top: 7px; overflow: hidden; text-align: center; }
.caption h1 {
  margin: -10px 0 0;
  font: 400 24px/20px "Noto Sans CJK SC", sans-serif;
  color: #3e4647;
  white-space: nowrap;
}
.win-buttons { width: 166px; display: flex; }
.win-buttons button { width: 54px; }
.highlight {
  position: absolute;
  left: 25%;
  right: 22.1%;
  top: -7px;
  height: 43px;
  border: 5px solid #ff1f10;
  border-radius: 5px;
}

/* Ribbon tabs */
.tabs {
  height: 53px;
  flex: none;
  display: flex;
  background: #3e4647;
  color: #fff;
  font-size: 23px;
}
.tab { padding: 0 41px 0 42px; }
.tab.file { padding: 0 38px; background: linear-gradient(170deg, #66d044, #52a836); }
.tab.active { background: #f8f9fb; color: #43822b; border-bottom: 1px solid #3e4647; }
.tab-tools { margin-left: auto; display: flex; }
.tab-tools button { width: 48px; }
.tab-tools .narrow { width: 30px; }
.tab-tools .caret { background: #fff; }
.tab-tools .help { font-weight: 700; }

/* Ribbon */
.ribbon {
  flex: none;
  display: flex;
  padding: 4px 0 3px;
  border-bottom: 1px solid #b5bcbe;
  font-weight: 300;
  color: #25292b;
}
.group {
  height: 200px;
  display: flex;
  flex-direction: column;
  align-items: center;
  border-right: 1px solid #b5bcbe;
}
.cols { display: flex; gap: 20px; padding: 0 15px; }
.col { display: flex; flex-direction: column; gap: 5px; }
.cmd { height: 46px; gap: 7px; justify-content: flex-start; }
.cmd .caret { margin-left: 12px; }
.cmd:disabled { color: #9da0a1; }
.cmd:disabled .caret { background: #adafb0; }
.big {
  min-width: 56px;
  height: 148px;
  flex-direction: column;
  justify-content: flex-start;
  padding-top: 10px;
}
.big span { margin-top: 20px; }
.big .caret { margin-top: 9px; }
.group-label { margin-top: auto; padding: 0 11px; gap: 7px; height: 42px; }

/* Quick access */
.quick { height: 48px; flex: none; display: flex; padding-left: 1px; border-bottom: 1px solid #b5bcbe; }
.quick button { width: 48px; }
.quick .narrow { width: 31px; }
.quick .pale .caret { background: #aaa; }
.quick .last { width: 46px; border-right: 1px solid #b5bcbe; }

/* Model tree */
.work { flex: 1; min-height: 0; display: flex; }
.side { width: 525px; flex: none; display: flex; flex-direction: column; background: #dae0df; }
.side-tabs { height: 50px; flex: none; display: flex; }
.side-tab { width: 61px; background: #f8f9fb; }
.panel {
  flex: 1;
  min-height: 0;
  display: flex;
  flex-direction: column;
  margin-right: 5px;
  padding-left: 14px;
  background: #f6fafb;
}
.tree-tools {
  height: 62px;
  flex: none;
  display: grid;
  grid-template-columns: 30px 28px 22px 29px 46px 44px 4px 48px 16px 42px 24px 40px 1fr 32px 6px 44px;
  align-items: center;
  justify-items: center;
  padding: 0 9px 0 6px;
}
.tree-tools button { height: 48px; }
.pressed { width: 48px; height: 48px; background: #dfe0e2; border: 1px solid #a9acae; }
.bar { width: 1px; height: 48px; background: #a9acae; }
.twist {
  width: 28px;
  height: 16px;
  flex: none;
  background: #929495;
  clip-path: polygon(8px 0, 20px 8px, 8px 16px);
}
.twist.down { clip-path: polygon(7px 1px, 21px 1px, 14px 14px); }
.corner { position: relative; width: 44px; }
.corner::after {
  content: "";
  position: absolute;
  right: 3px;
  bottom: 4px;
  width: 6px;
  height: 6px;
  background: #666;
  clip-path: polygon(100% 0, 100% 100%, 0 100%);
}
.filter { flex: none; display: grid; grid-template-columns: 46px 366px 38px 46px; align-items: center; justify-items: center; }
.field { position: relative; width: 100%; height: 54px; }
.field input { width: 100%; height: 100%; border: 1px solid #a9b0b2; background: #fff; font: inherit; padding: 0 40px 0 10px; }
.clear { position: absolute; right: 8px; top: 13px; width: 24px; height: 28px; color: #aaa; }
.plus { width: 20px; height: 20px; background: linear-gradient(#a5a7a8, #a5a7a8) center / 100% 6px no-repeat, linear-gradient(#a5a7a8, #a5a7a8) center / 6px 100% no-repeat; }

.tree {
  flex: 1;
  margin: 0 8px 0 0;
  padding: 15px 0 0;
  list-style: none;
  font-size: 22px;
  background: linear-gradient(#f6fafb, #f8f9fb 30px);
  border-bottom: 3px solid #dadfdf;
}
.tree li { height: 40px; display: flex; align-items: center; padding-left: 7px; white-space: nowrap; }
.tree .i { margin: 0 8px 0 5px; }
.tree .root { padding-left: 0; }
.tree .leaf { padding-left: 35px; }
.tree .deep { padding-left: 70px; }
.tree .insert {
  height: 14px;
  margin: 9px 0 9px 5px;
  border: solid #62c440;
  border-width: 0 1px;
  background: linear-gradient(#a6dd93 0 2px, #62c440 2px 4px) center / 100% 4px no-repeat;
}

/* Graphics area */
.view { flex: 1; min-width: 0; position: relative; background: #e8e9ed; }
.model { display: block; width: 100%; height: 100%; }
.model path { vector-effect: non-scaling-stroke; }
.view-tools {
  position: absolute;
  top: 7px;
  left: 50%;
  margin-left: -406px;
  height: 60px;
  display: flex;
  align-items: center;
  gap: 2px;
  padding: 0 5px;
  border: 1px solid #a1a3a5;
  background: #f8f9fb;
}
.view-tools button { width: 48px; height: 48px; }
.mark { position: absolute; right: 13px; bottom: 4px; width: 167px; }
.mark-name { font: italic 300 41px/48px "Noto Sans CJK SC", sans-serif; color: #000; white-space: nowrap; }
.mark-name span { color: #ff6a34; }
.mark-url { font: italic 16px/18px "DejaVu Sans", sans-serif; color: #999; }
.flame { position: absolute; left: 64px; top: -16px; width: 20px; height: 44px; }
```
